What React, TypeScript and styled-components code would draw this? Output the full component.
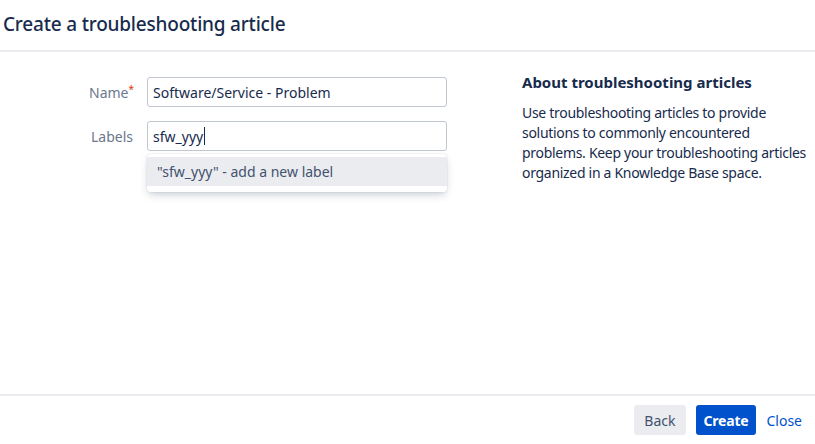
import React from "react";
import styled, { createGlobalStyle } from "styled-components";

const Global = createGlobalStyle`
  html, body { margin: 0; padding: 0; background: #fff; }
  body { font-family: "Noto Sans", "Open Sans", sans-serif; color: #172b4d; }
  * { box-sizing: border-box; }
`;

const Dialog = styled.div`
  width: 815px;
  height: 444px;
  display: flex;
  flex-direction: column;
  background: #fff;
`;

const Header = styled.div`
  height: 52px;
  border-bottom: 2px solid #ebecf0;
  display: flex;
  align-items: center;
  padding: 0 0 2px 3px;
`;

const Title = styled.h1`
  margin: 0;
  font-size: 19px;
  font-weight: 500;
  color: #172b4d;
  letter-spacing: -0.2px;
`;

const Body = styled.div`
  flex: 1;
  display: flex;
  padding-top: 25px;
`;

const Form = styled.div`
  width: 522px;
  display: flex;
  flex-direction: column;
  gap: 14px;
`;

const Row = styled.div`
  display: grid;
  grid-template-columns: 133px 300px;
  column-gap: 14px;
  align-items: center;
  position: relative;
`;

const Label = styled.label<{ $required?: boolean }>`
  text-align: right;
  font-size: 14px;
  color: #6b778c;
  margin-right: ${(p) => (p.$required ? "-1px" : "0")};
`;

const Req = styled.span`
  color: #de350b;
  font-size: 10px;
  vertical-align: 5px;
`;

const Input = styled.div`
  height: 30px;
  border: 1px solid #c1c7d0;
  border-radius: 3px;
  padding: 0 5px;
  display: flex;
  align-items: center;
  font-size: 14px;
  color: #172b4d;
`;

const Caret = styled.span`
  display: inline-block;
  width: 1px;
  height: 18px;
  background: #172b4d;
  margin-left: 1px;
`;

const Dropdown = styled.div`
  position: absolute;
  left: 147px;
  top: 33px;
  width: 300px;
  padding: 3px 0 6px;
  background: #fff;
  border-radius: 3px;
  box-shadow: 0 4px 8px -2px rgba(9, 30, 66, 0.25), 0 0 1px rgba(9, 30, 66, 0.31);
`;

const Option = styled.div`
  height: 29px;
  background: #ebecf0;
  display: flex;
  align-items: center;
  padding-left: 10px;
  font-size: 14px;
  color: #42526e;
`;

const Aside = styled.div`
  width: 285px;
  margin-top: -5px;
`;

const AsideTitle = styled.h2`
  margin: 0 0 11px;
  font-size: 15px;
  font-weight: 700;
  color: #172b4d;
  line-height: 20px;
`;

const AsideText = styled.p`
  margin: 0;
  font-size: 14px;
  line-height: 20px;
  color: #172b4d;
  letter-spacing: -0.3px;
`;

const Footer = styled.div`
  height: 50px;
  border-top: 2px solid #ebecf0;
  display: flex;
  justify-content: flex-end;
  align-items: center;
  gap: 10px;
  padding: 0 13px 0 0;
`;

const Button = styled.button<{ $variant?: "default" | "primary" | "link" }>`
  height: 30px;
  border: none;
  border-radius: 3px;
  padding: 0 ${(p) => (p.$variant === "link" ? "0" : p.$variant === "primary" ? "8px" : "10px")};
  font-family: inherit;
  font-size: 14px;
  font-weight: ${(p) => (p.$variant === "primary" ? 700 : 400)};
  letter-spacing: ${(p) => (p.$variant === "primary" ? "-0.2px" : "0")};
  background: ${(p) =>
    p.$variant === "primary" ? "#0052cc" : p.$variant === "link" ? "transparent" : "#ebecf0"};
  color: ${(p) => (p.$variant === "primary" ? "#fff" : p.$variant === "link" ? "#0052cc" : "#42526e")};
  cursor: pointer;
`;

export default function App() {
  return (
    <>
      <Global />
      <Dialog>
        <Header>
          <Title>Create a troubleshooting article</Title>
        </Header>
        <Body>
          <Form>
            <Row>
              <Label $required>
                Name<Req>*</Req>
              </Label>
              <Input>Software/Service - Problem</Input>
            </Row>
            <Row>
              <Label>Labels</Label>
              <Input>
                sfw_yyy<Caret />
              </Input>
              <Dropdown>
                <Option>"sfw_yyy" - add a new label</Option>
              </Dropdown>
            </Row>
          </Form>
          <Aside>
            <AsideTitle>About troubleshooting articles</AsideTitle>
            <AsideText>
              Use troubleshooting articles to provide solutions to commonly encountered problems. Keep your
              troubleshooting articles organized in a Knowledge Base space.
            </AsideText>
          </Aside>
        </Body>
        <Footer>
          <Button>Back</Button>
          <Button $variant="primary">Create</Button>
          <Button $variant="link">Close</Button>
        </Footer>
      </Dialog>
    </>
  );
}
